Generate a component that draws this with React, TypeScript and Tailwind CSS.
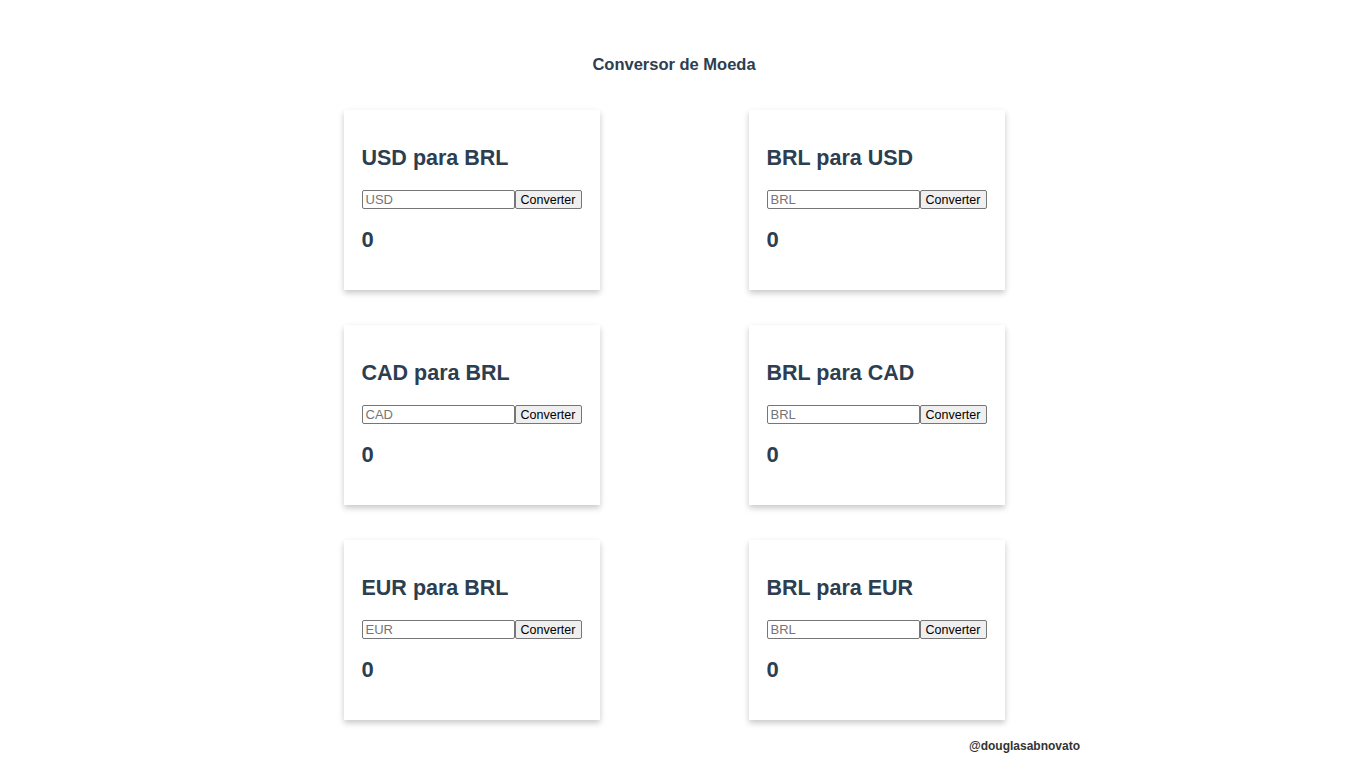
import React, { useState } from "react";

const pairs = [
  { from: "USD", to: "BRL", rate: 5.2 },
  { from: "BRL", to: "USD", rate: 1 / 5.2 },
  { from: "CAD", to: "BRL", rate: 3.9 },
  { from: "BRL", to: "CAD", rate: 1 / 3.9 },
  { from: "EUR", to: "BRL", rate: 5.6 },
  { from: "BRL", to: "EUR", rate: 1 / 5.6 },
];

function Conversor({ from, to, rate }: { from: string; to: string; rate: number }) {
  const [value, setValue] = useState("");
  const [result, setResult] = useState<number | string>(0);

  return (
    <div className="bg-white w-[256px] h-[180px] px-[18px] pt-[35px] shadow-[0_3px_6px_rgba(0,0,0,0.22)]">
      <h2 className="text-[21.5px] leading-[26px] font-bold text-[#2c3e50]">
        {from} para {to}
      </h2>
      <div className="flex mt-[19px]">
        <input
          type="text"
          placeholder={from}
          value={value}
          onChange={(e) => setValue(e.target.value)}
          className="w-[153px] h-[19px] border border-[#767676] rounded-[2px] px-[3px] text-[13px] text-black placeholder:text-[#757575] bg-white outline-none"
        />
        <button
          onClick={() => setResult((Number(value) * rate).toFixed(2))}
          className="flex items-center justify-center h-[19px] w-[67px] pt-px border border-[#767676] rounded-[2px] bg-[#efefef] text-[12.5px] leading-none text-black"
        >
          Converter
        </button>
      </div>
      <h2 className="text-[22px] leading-[26px] font-bold text-[#2c3e50] mt-[18px]">{result}</h2>
    </div>
  );
}

export default function App() {
  return (
    <div className="min-h-[770px] bg-white font-['Liberation_Sans',Arial,sans-serif] text-[#2c3e50]">
      <h1 className="pt-[54px] text-center text-[16.5px] leading-[20px] font-bold">Conversor de Moeda</h1>
      <div className="grid grid-cols-[256px_256px] gap-x-[149px] gap-y-[35px] justify-center mt-[36px]">
        {pairs.map((p, i) => (
          <Conversor key={i} {...p} />
        ))}
      </div>
      <p className="text-right pr-[268px] mt-[19px] text-[12px] leading-[15px] font-bold text-[#333]">
        @douglasabnovato
      </p>
    </div>
  );
}
